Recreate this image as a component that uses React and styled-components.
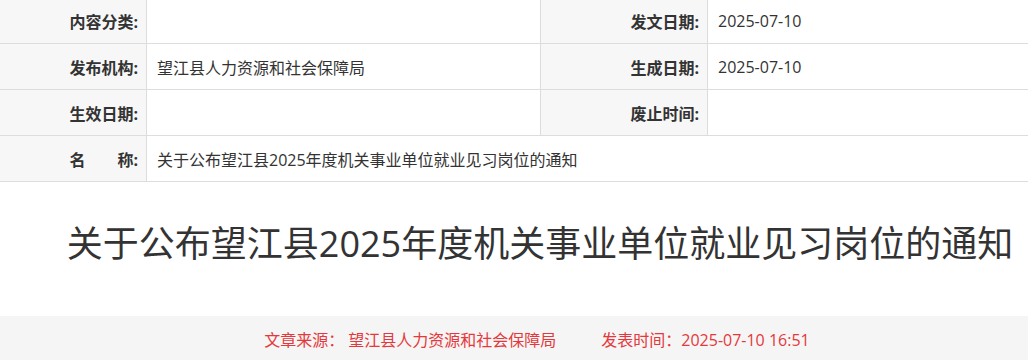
import React from "react";
import styled, { createGlobalStyle } from "styled-components";

const GlobalStyle = createGlobalStyle`
  html, body {
    margin: 0;
    padding: 0;
    background: #fff;
    overflow: hidden;
  }
  body {
    font-family: "Open Sans", "Noto Sans CJK SC", sans-serif;
    color: #333;
  }
`;

const Page = styled.div`
  width: 1028px;
`;

const InfoGrid = styled.div`
  display: grid;
  grid-template-columns: 147px 394px 167px 1fr;
  margin-top: -2px;
`;

const Cell = styled.div`
  box-sizing: border-box;
  height: 46px;
  display: flex;
  align-items: center;
  border-bottom: 1px solid #dddddd;
  font-size: 16px;
  white-space: nowrap;
  overflow: hidden;
`;

const LabelCell = styled(Cell)`
  justify-content: flex-end;
  padding-right: 8px;
  background: #f7f7f7;
  border-right: 1px solid #dddddd;
  font-weight: 700;
  color: #333;
`;

const ValueCell = styled(Cell)`
  padding-left: 10px;
  color: #333;
  grid-column: ${(p) => (p.$span ? `span ${p.$span}` : "auto")};
  border-right: ${(p) => (p.$last ? "none" : "1px solid #dddddd")};
`;

const Title = styled.h1`
  margin: 0;
  padding: 36px 0 47px 52px;
  text-align: center;
  font-size: 36px;
  line-height: 51px;
  font-weight: 400;
  color: #333;
  white-space: nowrap;
`;

const Footer = styled.div`
  background: #f5f5f5;
  height: 60px;
  box-sizing: border-box;
  padding: 12px 0 0 46px;
  display: flex;
  justify-content: center;
  font-size: 16px;
  line-height: 24px;
  color: #e4393c;
`;

const FooterItem = styled.span`
  margin-left: ${(p) => p.$gap || 0}px;
  white-space: nowrap;
`;

const rows = [
  [
    { label: "内容分类:", value: "" },
    { label: "发文日期:", value: "2025-07-10" },
  ],
  [
    { label: "发布机构:", value: "望江县人力资源和社会保障局" },
    { label: "生成日期:", value: "2025-07-10" },
  ],
  [
    { label: "生效日期:", value: "" },
    { label: "废止时间:", value: "" },
  ],
];

const docTitle = "关于公布望江县2025年度机关事业单位就业见习岗位的通知";

export default function App() {
  return (
    <Page>
      <GlobalStyle />
      <InfoGrid>
        {rows.map((row, i) => (
          <React.Fragment key={i}>
            <LabelCell>{row[0].label}</LabelCell>
            <ValueCell>{row[0].value}</ValueCell>
            <LabelCell>{row[1].label}</LabelCell>
            <ValueCell $last>{row[1].value}</ValueCell>
          </React.Fragment>
        ))}
        <LabelCell>名　　称:</LabelCell>
        <ValueCell $span={3} $last>
          {docTitle}
        </ValueCell>
      </InfoGrid>
      <Title>{docTitle}</Title>
      <Footer>
        <FooterItem>文章来源：</FooterItem>
        <FooterItem $gap={4}>望江县人力资源和社会保障局</FooterItem>
        <FooterItem $gap={45}>发表时间：2025-07-10 16:51</FooterItem>
      </Footer>
    </Page>
  );
}
